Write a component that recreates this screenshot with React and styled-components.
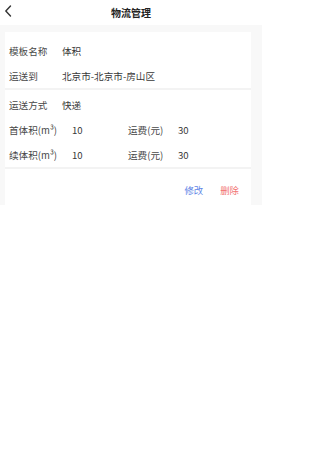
import React from 'react';
import styled, { createGlobalStyle } from 'styled-components';

const GlobalStyle = createGlobalStyle`
  html, body {
    margin: 0;
    padding: 0;
    background: #ffffff;
  }
  body {
    font-family: "Noto Sans CJK SC", "Liberation Sans", sans-serif;
    -webkit-font-smoothing: antialiased;
  }
`;

const Page = styled.div`
  width: 262px;
  min-height: 474px;
  background: #ffffff;
`;

const Header = styled.div`
  position: relative;
  height: 25px;
  display: flex;
  align-items: center;
  justify-content: center;
`;

const Back = styled.div`
  position: absolute;
  left: 4px;
  top: 5px;
  width: 8px;
  height: 12px;
  display: flex;
`;

const Title = styled.div`
  font-size: 10px;
  font-weight: 700;
  color: #222;
  line-height: 1;
`;

const List = styled.div`
  background: #f8f8f8;
  padding: 7px 11px 0 5px;
`;

const Card = styled.div`
  background: #ffffff;
  padding-top: ${(p) => p.$top || 0}px;
  border-bottom: ${(p) => (p.$last ? 'none' : '2px solid #f3f3f3')};
`;

const Row = styled.div`
  height: 25px;
  display: flex;
  align-items: center;
  padding-left: 4px;
  font-size: 9.6px;
  color: #484848;
`;

const Label = styled.span`
  width: ${(p) => p.$w || 53}px;
  flex-shrink: 0;
  white-space: nowrap;
`;

const Value = styled.span`
  color: #383838;
  white-space: nowrap;
  width: ${(p) => (p.$w ? `${p.$w}px` : 'auto')};
  flex-shrink: 0;
`;

const Actions = styled.div`
  height: 30px;
  padding-top: 6px;
  display: flex;
  align-items: center;
  justify-content: flex-end;
  gap: 17px;
  padding-right: 12px;
  background: #ffffff;
`;

const ActionBtn = styled.span`
  font-size: 9.4px;
  color: ${(p) => (p.$danger ? '#f27272' : '#6186e6')};
  cursor: pointer;
`;

export default function App() {
  return (
    <>
      <GlobalStyle />
      <Page>
        <Header>
          <Back>
            <svg width="8" height="12" viewBox="0 0 8 12">
              <path d="M6.5 1 L1.8 6 L6.5 11" fill="none" stroke="#333" strokeWidth="1.4" strokeLinecap="round" strokeLinejoin="round" />
            </svg>
          </Back>
          <Title>物流管理</Title>
        </Header>
        <List>
          <Card $top={6}>
            <Row>
              <Label>模板名称</Label>
              <Value>体积</Value>
            </Row>
            <Row>
              <Label>运送到</Label>
              <Value>北京市-北京市-房山区</Value>
            </Row>
          </Card>
          <Card $top={2}>
            <Row>
              <Label>运送方式</Label>
              <Value>快递</Value>
            </Row>
            <Row>
              <Label $w={63}>首体积(m³)</Label>
              <Value $w={56}>10</Value>
              <Label $w={50}>运费(元)</Label>
              <Value>30</Value>
            </Row>
            <Row>
              <Label $w={63}>续体积(m³)</Label>
              <Value $w={56}>10</Value>
              <Label $w={50}>运费(元)</Label>
              <Value>30</Value>
            </Row>
          </Card>
          <Card $last>
            <Actions>
              <ActionBtn>修改</ActionBtn>
              <ActionBtn $danger>删除</ActionBtn>
            </Actions>
          </Card>
        </List>
      </Page>
    </>
  );
}
